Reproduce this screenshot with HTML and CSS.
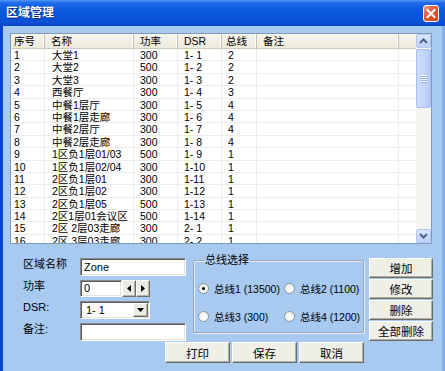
FILE: index.html
```html
<!DOCTYPE html>
<html lang="zh-CN">
<head>
    <meta charset="UTF-8">
    <title>区域管理</title>
    <link rel="stylesheet" href="styles.css">
</head>
<body>
    <div class="window">
        <div class="titlebar">
            <span class="title">区域管理</span>
            <div class="close">
                <svg width="14" height="15" viewBox="0 0 14 15"><path d="M3.5 4 L10.5 11 M10.5 4 L3.5 11" stroke="#fff" stroke-width="2" stroke-linecap="square"/></svg>
            </div>
        </div>

        <div class="client">
            <div class="list">
                <div class="list-main">
                    <div class="list-head">
                        <div class="c-first">序号</div>
                        <div>名称</div>
                        <div>功率</div>
                        <div>DSR</div>
                        <div class="c-bus">总线</div>
                        <div>备注</div>
                        <div></div>
                    </div>
                    <div class="list-body">
                        <div class="row"><div class="c-first">1</div><div class="c-name">大堂1</div><div>300</div><div>1- 1</div><div class="c-bus">2</div><div></div><div></div></div>
                        <div class="row"><div class="c-first">2</div><div class="c-name">大堂2</div><div>500</div><div>1- 2</div><div class="c-bus">2</div><div></div><div></div></div>
                        <div class="row"><div class="c-first">3</div><div class="c-name">大堂3</div><div>300</div><div>1- 3</div><div class="c-bus">2</div><div></div><div></div></div>
                        <div class="row"><div class="c-first">4</div><div class="c-name">西餐厅</div><div>300</div><div>1- 4</div><div class="c-bus">3</div><div></div><div></div></div>
                        <div class="row"><div class="c-first">5</div><div class="c-name">中餐1层厅</div><div>300</div><div>1- 5</div><div class="c-bus">4</div><div></div><div></div></div>
                        <div class="row"><div class="c-first">6</div><div class="c-name">中餐1层走廊</div><div>300</div><div>1- 6</div><div class="c-bus">4</div><div></div><div></div></div>
                        <div class="row"><div class="c-first">7</div><div class="c-name">中餐2层厅</div><div>300</div><div>1- 7</div><div class="c-bus">4</div><div></div><div></div></div>
                        <div class="row"><div class="c-first">8</div><div class="c-name">中餐2层走廊</div><div>300</div><div>1- 8</div><div class="c-bus">4</div><div></div><div></div></div>
                        <div class="row"><div class="c-first">9</div><div class="c-name">1区负1层01/03</div><div>500</div><div>1- 9</div><div class="c-bus">1</div><div></div><div></div></div>
                        <div class="row"><div class="c-first">10</div><div class="c-name">1区负1层02/04</div><div>300</div><div>1-10</div><div class="c-bus">1</div><div></div><div></div></div>
                        <div class="row"><div class="c-first">11</div><div class="c-name">2区负1层01</div><div>300</div><div>1-11</div><div class="c-bus">1</div><div></div><div></div></div>
                        <div class="row"><div class="c-first">12</div><div class="c-name">2区负1层02</div><div>300</div><div>1-12</div><div class="c-bus">1</div><div></div><div></div></div>
                        <div class="row"><div class="c-first">13</div><div class="c-name">2区负1层05</div><div>500</div><div>1-13</div><div class="c-bus">1</div><div></div><div></div></div>
                        <div class="row"><div class="c-first">14</div><div class="c-name">2区1层01会议区</div><div>500</div><div>1-14</div><div class="c-bus">1</div><div></div><div></div></div>
                        <div class="row"><div class="c-first">15</div><div class="c-name">2区 2层03走廊</div><div>300</div><div>2- 1</div><div class="c-bus">1</div><div></div><div></div></div>
                        <div class="row"><div class="c-first">16</div><div class="c-name">2区 3层03走廊</div><div>300</div><div>2- 2</div><div class="c-bus">1</div><div></div><div></div></div>
                    </div>
                </div>
                <div class="vscroll">
                    <div class="sb-btn">
                        <svg width="9" height="6" viewBox="0 0 9 6"><polyline points="1,5 4.5,1.5 8,5" fill="none" stroke="#4d6185" stroke-width="2"/></svg>
                    </div>
                    <div class="sb-track">
                        <div class="sb-thumb"><span></span><span></span><span></span><span></span></div>
                    </div>
                    <div class="sb-btn">
                        <svg width="9" height="6" viewBox="0 0 9 6"><polyline points="1,1 4.5,4.5 8,1" fill="none" stroke="#4d6185" stroke-width="2"/></svg>
                    </div>
                </div>
            </div>

            <div class="editor">
                <div class="fields">
                    <label>区域名称</label>
                    <input class="text" value="Zone">

                    <label>功率</label>
                    <div class="spin">
                        <input class="text" value="0">
                        <span class="spin-btn"><svg width="4" height="7" viewBox="0 0 4 7"><polygon points="4,0 0,3.5 4,7"/></svg></span>
                        <span class="spin-btn"><svg width="4" height="7" viewBox="0 0 4 7"><polygon points="0,0 4,3.5 0,7"/></svg></span>
                    </div>

                    <label>DSR:</label>
                    <div class="combo">
                        <span>1- 1</span>
                        <span class="drop"><svg width="7" height="4" viewBox="0 0 7 4"><polygon points="0,0 7,0 3.5,4"/></svg></span>
                    </div>

                    <label>备注:</label>
                    <input class="text" value="">
                </div>

                <fieldset class="bus">
                    <legend>总线选择</legend>
                    <div class="bus-grid">
                        <div class="opt"><span class="dot checked"></span>总线1 (13500)</div>
                        <div class="opt"><span class="dot"></span>总线2 (1100)</div>
                        <div class="opt"><span class="dot"></span>总线3 (300)</div>
                        <div class="opt"><span class="dot"></span>总线4 (1200)</div>
                    </div>
                </fieldset>

                <div class="side-buttons">
                    <button class="btn">增加</button>
                    <button class="btn">修改</button>
                    <button class="btn">删除</button>
                    <button class="btn">全部删除</button>
                </div>
            </div>

            <div class="footer-buttons">
                <button class="btn">打印</button>
                <button class="btn">保存</button>
                <button class="btn">取消</button>
            </div>
        </div>
    </div>
</body>
</html>
```

FILE: styles.css
```css
* {
    box-sizing: border-box;
}

body {
    margin: 0;
    font-family: "Liberation Sans", "Noto Sans CJK SC", sans-serif;
    font-size: 11px;
    color: #000;
}

.window {
    width: 445px;
    height: 371px;
    display: flex;
    flex-direction: column;
    overflow: hidden;
}

/* XP style caption */
.titlebar {
    height: 26px;
    display: flex;
    align-items: center;
    justify-content: space-between;
    padding: 0 6px 0 6px;
    background: linear-gradient(#4f97f7 0, #1f69e8 3px, #0c5ae0 10px, #0a53d9 20px, #0a49c8 26px);
}

.title {
    color: #fff;
    font-weight: bold;
    font-size: 12px;
    line-height: 14px;
    text-shadow: 1px 1px 0 #0a2a80;
}

.close {
    width: 16px;
    height: 17px;
    margin-top: 1px;
    display: flex;
    align-items: center;
    justify-content: center;
    border: 1px solid #fff;
    border-radius: 3px;
    background: linear-gradient(135deg, #f09a7c, #e0603a 40%, #c83e1c);
}

.client {
    flex: 1;
    background: #a8caf0;
    border-left: 3px solid #0a46cc;
    border-right: 3px solid #86ace9;
    padding: 7px 0 0 7px;
}

/* list view */
.list {
    width: 422px;
    height: 211px;
    display: flex;
    border: 1px solid #7f9db9;
    background: #fff;
}

.list-main {
    flex: 1;
    overflow: hidden;
    font-size: 10.5px;
}

.list-head,
.row {
    display: grid;
    grid-template-columns: 34px 89px 44px 44px 35px 142px 17px;
}

.list-head {
    height: 15px;
    background: linear-gradient(#f6f5ee, #ebeadb);
    border-bottom: 1px solid #cfcbbb;
}

.list-head div {
    line-height: 14px;
    padding-left: 6px;
    border-right: 1px solid #c3bfae;
    box-shadow: inset -1px 0 0 #fff;
    white-space: nowrap;
}

.list-head div:last-child {
    border-right: none;
    box-shadow: none;
}

.list-body {
    height: 194px;
    overflow: hidden;
}

.row {
    height: 12.4px;
    border-bottom: 1px solid #ececec;
}

.row div {
    line-height: 12px;
    padding-left: 6px;
    border-right: 1px solid #ececec;
    white-space: nowrap;
    overflow: hidden;
}

.row div:last-child {
    border-right: none;
}

.list-head .c-first,
.row .c-first {
    padding-left: 3px;
}

.row .c-name {
    padding-left: 7px;
}

.list-head .c-bus {
    padding-left: 4px;
}

/* scrollbar */
.vscroll {
    width: 15px;
    display: flex;
    flex-direction: column;
    background: #f6f5f0;
}

.sb-btn {
    height: 14px;
    display: flex;
    align-items: center;
    justify-content: center;
    border: 1px solid #b3c6f2;
    border-radius: 2px;
    background: linear-gradient(#dbe6fe, #bdd0fa);
}

.sb-track {
    flex: 1;
    padding-top: 1px;
}

.sb-thumb {
    height: 59px;
    display: flex;
    flex-direction: column;
    align-items: center;
    justify-content: center;
    gap: 1px;
    border: 1px solid #a8bff3;
    border-radius: 2px;
    background: linear-gradient(90deg, #cddcfd, #c1d4fc 60%, #b4c9f8);
}

.sb-thumb span {
    width: 6px;
    height: 1px;
    background: #eef3fe;
    box-shadow: 0 1px 0 #9fb6ea;
}

/* edit area */
.editor {
    display: flex;
    align-items: flex-start;
    margin-top: 14px;
}

.fields {
    display: grid;
    grid-template-columns: 57px 106px;
    grid-auto-rows: 18px;
    row-gap: 3.5px;
    margin-left: 13px;
}

.fields label {
    line-height: 12px;
    white-space: nowrap;
}

.text {
    width: 100%;
    height: 18px;
    margin: 0;
    padding: 0 3px;
    border: 1px solid;
    border-color: #888 #fff #fff #888;
    box-shadow: inset 1px 1px 0 #5a5a5a, inset -1px -1px 0 #e4e2da;
    background: #fff;
    font: 11px "Liberation Sans", "Noto Sans CJK SC", sans-serif;
    color: #000;
    outline: none;
}

.spin {
    display: flex;
    width: 70px;
    height: 17px;
}

.spin .text {
    width: 42px;
    height: 17px;
}

.spin-btn,
.drop {
    display: flex;
    align-items: center;
    justify-content: center;
    background: #ecebe4;
    border: 1px solid;
    border-color: #fff #6f6f6f #6f6f6f #fff;
    box-shadow: inset -1px -1px 0 #b5b2a5;
}

.spin-btn {
    width: 14px;
}

.combo {
    width: 70px;
    height: 18px;
    display: flex;
    align-items: center;
    justify-content: space-between;
    padding: 2px 1px 2px 5px;
    border: 1px solid;
    border-color: #888 #fff #fff #888;
    box-shadow: inset 1px 1px 0 #5a5a5a, inset -1px -1px 0 #e4e2da;
    background: #fff;
}

.drop {
    width: 15px;
    height: 14px;
}

/* bus group */
.bus {
    width: 171px;
    margin: -4px 0 0 7px;
    padding: 15px 0 9px 4px;
    border: 1px solid #97a3b2;
    border-radius: 2px;
    box-shadow: inset 1px 1px 0 #e6eefa, 1px 1px 0 #e6eefa;
}

.bus legend {
    margin-left: 6px;
    padding: 0 1px;
    line-height: 12px;
}

.bus-grid {
    display: grid;
    grid-template-columns: 86px auto;
    grid-auto-rows: 14px;
    row-gap: 14px;
    font-size: 10.5px;
}

.opt {
    display: flex;
    align-items: center;
    gap: 5px;
    white-space: nowrap;
}

.dot {
    width: 11px;
    height: 11px;
    flex: none;
    border: 1px solid #8c939c;
    border-radius: 50%;
    background: radial-gradient(circle at 60% 60%, #fff, #e9e8e2);
    position: relative;
}

.dot.checked::after {
    content: "";
    position: absolute;
    left: 3px;
    top: 3px;
    width: 3px;
    height: 3px;
    border-radius: 50%;
    background: #000;
}

/* buttons */
.btn {
    margin: 0;
    padding: 0;
    background: #efeee7;
    border: 1px solid;
    border-color: #fff #6b6b6b #6b6b6b #fff;
    box-shadow: inset -1px -1px 0 #b0ada0;
    font: 11.5px "Liberation Sans", "Noto Sans CJK SC", sans-serif;
    color: #000;
}

.side-buttons {
    display: flex;
    flex-direction: column;
    gap: 1px;
    margin-left: 5px;
}

.side-buttons .btn {
    width: 64px;
    height: 20px;
}

.footer-buttons {
    display: flex;
    gap: 2px;
    margin: 1px 0 0 155px;
}

.footer-buttons .btn {
    width: 65px;
    height: 21px;
}
```
